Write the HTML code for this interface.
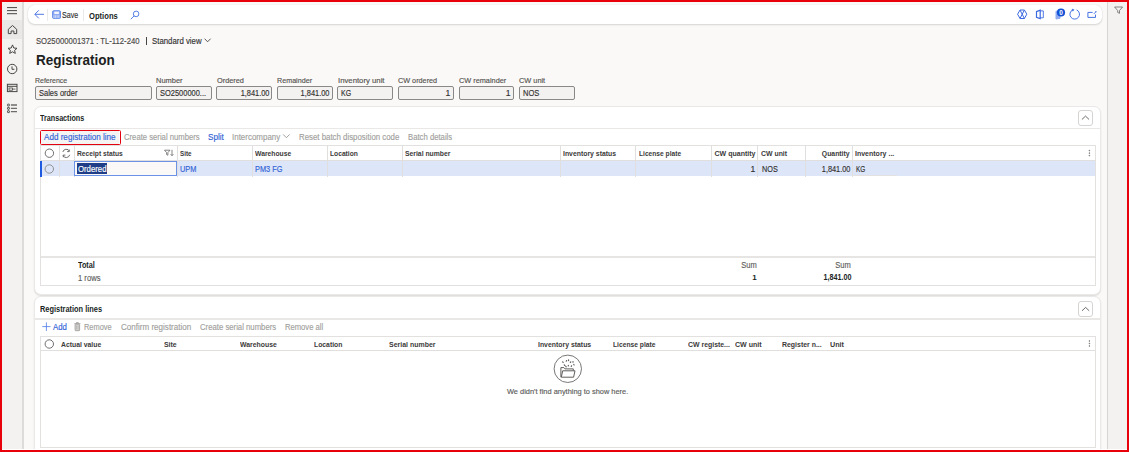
<!DOCTYPE html>
<html><head><meta charset="utf-8">
<style>
html,body{margin:0;padding:0;}
body{width:1129px;height:452px;overflow:hidden;position:relative;background:#faf9f8;font-family:"Liberation Sans",sans-serif;}
.a{position:absolute;box-sizing:border-box;}
.t{position:absolute;white-space:nowrap;line-height:normal;font-family:"Liberation Sans",sans-serif;}
.n{-webkit-text-stroke:0.15px currentColor;}
.fld{position:absolute;box-sizing:border-box;height:14.5px;top:85.7px;border:1px solid #8a8886;border-radius:2px;background:#f3f2f1;}
.vl{position:absolute;width:1px;background:#e1dfdd;}
svg{position:absolute;overflow:visible;}
</style></head><body>
<!-- nav -->
<div class="a" style="left:0;top:0;width:22px;height:452px;background:#f3f2f1;"></div>
<div class="a" style="left:2px;top:20px;width:20px;height:19px;background:#e9e8e6;"></div>
<div class="a" style="left:22px;top:0;width:2px;height:452px;background:#dddcda;"></div>
<!-- right panel -->
<div class="a" style="left:1107px;top:0;width:22px;height:452px;background:#f3f2f1;"></div>
<div class="a" style="left:1107px;top:0;width:1px;height:452px;background:#d6d5d3;"></div>

<!-- nav icons -->


<!-- toolbar card -->
<div class="a" style="left:27.8px;top:5.3px;width:1074px;height:18.6px;background:#fff;border-radius:6.5px;box-shadow:0 0 1px rgba(0,0,0,0.14),0 1px 2px rgba(0,0,0,0.14);"></div>
<div class="a" style="left:47px;top:8.8px;width:1px;height:11.8px;background:#ebeae8;"></div>
<div class="a" style="left:83px;top:9px;width:1px;height:11.5px;background:#ebeae8;"></div>

<!-- right toolbar icons -->



<div class="a" style="left:145.9px;top:37px;width:1px;height:8px;background:#484644;"></div>
<!-- header fields -->
<div class="fld" style="left:35px;width:116.5px;"></div>
<div class="fld" style="left:156px;width:55.5px;"></div>
<div class="fld" style="left:216.3px;width:56px;"></div>
<div class="fld" style="left:276.8px;width:56px;"></div>
<div class="fld" style="left:337.3px;width:55.5px;"></div>
<div class="fld" style="left:398px;width:56px;"></div>
<div class="fld" style="left:458.6px;width:55.5px;"></div>
<div class="fld" style="left:519px;width:55.8px;"></div>

<!-- card 1 -->
<div class="a" style="left:34px;top:106px;width:1066.5px;height:188.6px;background:#fff;border-radius:7px;border:1px solid #ebe9e7;box-shadow:0 1px 1.5px rgba(0,0,0,0.12);"></div>
<div class="a" style="left:35px;top:127.8px;width:1065px;height:1.5px;background:#e9e8e6;"></div>
<div class="a" style="left:1078.2px;top:110px;width:14.7px;height:15.6px;border:1px solid #d6d4d2;border-radius:3px;background:#fff;"></div>

<!-- add registration line button w/ red box -->
<div class="a" style="left:41px;top:131.3px;width:78px;height:12.3px;background:#f5f4f3;"></div>
<div class="a" style="left:39.5px;top:129.7px;width:81.3px;height:15.5px;border:1.9px solid #e3000f;border-radius:1.5px;"></div>

<!-- grid 1 -->
<div class="a" style="left:40px;top:145px;width:1056px;height:141px;border:1px solid #e3e1df;background:#fff;"></div>
<div class="a" style="left:41px;top:160px;width:1054px;height:1px;background:#e1dfdd;"></div>
<div class="a" style="left:41px;top:161px;width:1054px;height:15.3px;background:#dce6f8;"></div>
<div class="a" style="left:40px;top:161px;width:2px;height:15.6px;background:#1d5ae0;"></div>
<div class="a" style="left:41px;top:256px;width:1054px;height:1.5px;background:#e6e5e3;"></div>
<!-- column dividers -->
<div class="vl" style="left:59px;top:146px;height:30.5px;"></div>
<div class="vl" style="left:74px;top:146px;height:30.5px;"></div>
<div class="vl" style="left:177px;top:146px;height:30.5px;"></div>
<div class="vl" style="left:252px;top:146px;height:30.5px;"></div>
<div class="vl" style="left:327px;top:146px;height:30.5px;"></div>
<div class="vl" style="left:402px;top:146px;height:30.5px;"></div>
<div class="vl" style="left:560px;top:146px;height:30.5px;"></div>
<div class="vl" style="left:635px;top:146px;height:30.5px;"></div>
<div class="vl" style="left:711px;top:146px;height:30.5px;"></div>
<div class="vl" style="left:757px;top:146px;height:30.5px;"></div>
<div class="vl" style="left:805px;top:146px;height:30.5px;"></div>
<div class="vl" style="left:852px;top:146px;height:30.5px;"></div>
<div class="a" style="left:852.3px;top:175.3px;width:45px;height:1px;background:#e3e2e0;"></div>
<!-- editing cell -->
<div class="a" style="left:74px;top:161px;width:103px;height:15.3px;border:1.3px solid #6a93e8;background:#faf9f8;"></div>
<div class="a" style="left:77px;top:163px;width:29.5px;height:11.4px;background:#1f3e87;"></div>


<!-- card 2 -->
<div class="a" style="left:34px;top:296px;width:1066.5px;height:170px;background:#fff;border-radius:7px;border:1px solid #ebe9e7;box-shadow:0 1px 2px rgba(0,0,0,0.10);"></div>
<div class="a" style="left:35px;top:318.3px;width:1065px;height:1.5px;background:#e9e8e6;"></div>
<div class="a" style="left:1078.4px;top:301.2px;width:14.5px;height:15.6px;border:1px solid #d6d4d2;border-radius:3px;background:#fff;"></div>
<div class="a" style="left:40px;top:336px;width:1056px;height:112px;border:1px solid #e3e1df;background:#fff;"></div>
<div class="a" style="left:41px;top:350.3px;width:1054px;height:1px;background:#e1dfdd;"></div>


<svg style="left:0;top:0" width="24" height="120" viewBox="0 0 24 120">
  <g stroke="#484644" stroke-width="1" fill="none">
    <path d="M7 7.6H17M7 10.6H17M7 13.7H17"/>
    <path d="M8.3 29.3L12.5 25.5L16.7 29.3V33.6H13.9V31H11.1V33.6H8.3Z" stroke-linejoin="round"/>
    <path d="M12.5 44.9L13.8 48L17 48.3L14.6 50.4L15.3 53.4L12.5 51.8L9.7 53.4L10.4 50.4L8 48.3L11.2 48Z" stroke-linejoin="round"/>
    <circle cx="12.2" cy="69" r="4.7"/>
    <path d="M12 66.4V69.3H14.4"/>
    <rect x="7.4" y="84.3" width="9.6" height="7.3" />
    <path d="M7.4 86.3H17"/>
    <rect x="9" y="88" width="3.4" height="2.2" stroke-width="0.8"/>
    <path d="M12.4 89.1H15.5" stroke-width="0.8"/>
    <path d="M10.9 105H17M10.9 108.3H17M10.9 111.6H17" stroke="#6e6c6a" stroke-width="1.3"/>
    <rect x="7.5" y="104.1" width="1.9" height="1.9" rx="0.4" stroke-width="0.9"/>
    <rect x="7.5" y="107.4" width="1.9" height="1.9" rx="0.4" stroke-width="0.9"/>
    <rect x="7.5" y="110.7" width="1.9" height="1.9" rx="0.4" stroke-width="0.9"/>
  </g>
</svg>
<svg style="left:0;top:0" width="160" height="30" viewBox="0 0 160 30">
  <g stroke="#3c6ae0" stroke-width="0.9" fill="none">
    <path d="M35 14.3H44M38.8 10.3L34.8 14.3L38.8 18.3"/>
    <rect x="52.6" y="10.7" width="7.9" height="7.7" rx="1" fill="#8eaaf1" stroke="#5a84e8"/>
    <rect x="54.3" y="11.6" width="4.6" height="2.4" fill="#f2f5fd" stroke="none"/>
    <path d="M54 15.2V18.2M55.6 15.2V18.2M57.2 15.2V18.2M58.8 15.2V18.2" stroke="#e4ebfb" stroke-width="0.7"/>
  </g>
  <g stroke="#3c6ae0" stroke-width="0.85" fill="none">
    <circle cx="136.1" cy="13.9" r="2.8"/>
    <path d="M134.1 15.9L130.8 19.2"/>
  </g>
</svg>
<svg style="left:0;top:0" width="1129" height="30" viewBox="0 0 1129 30">
  <g stroke="#3c6ae0" stroke-width="1" fill="none">
    <path d="M1020 10H1024.4L1026.8 14.2L1024.4 18.5H1020L1017.6 14.2Z" stroke-linejoin="round"/>
    <path d="M1020 10L1024.4 18.5M1024.4 10L1020 18.5"/>
    <path d="M1036.5 11.6L1040.2 10.1V18.6L1036.5 17.3Z" stroke-width="1.2"/>
    <path d="M1040.2 10.9H1043.3V17.8H1040.2" stroke-width="0.9"/>
    <path d="M1056 11.2H1060V18.3L1056 19Z" fill="#8eaaf0" stroke="#8eaaf0"/>
    <path d="M1076.6 9.9A4.8 4.8 0 1 1 1072.8 9.9" stroke-width="0.95"/>
    <path d="M1072.1 9.2L1073.9 9.6L1072.9 11.2Z" fill="#3c6ae0" stroke-width="0.6"/>
    <path d="M1092.6 12.4H1087.9V17.4H1095.5V14.6" stroke-width="0.95"/>
    <path d="M1093.6 14.1L1095.7 12" stroke-width="0.8"/>
    <circle cx="1095.9" cy="11.7" r="0.7" fill="#3c6ae0" stroke="none"/>
  </g>
  <circle cx="1061" cy="12.5" r="4.1" fill="#1250d6"/>
  <text x="1061" y="14.8" font-size="6.5" font-weight="bold" fill="#fff" text-anchor="middle" font-family="Liberation Sans">0</text>
  <g stroke="#605e5c" stroke-width="0.9" fill="none">
    <path d="M1114.6 7H1122.6L1119.5 10.5V13.3L1117.7 12.5V10.5Z" stroke-width="0.75"/>
  </g>
</svg>
<svg style="left:0;top:0" width="220" height="50" viewBox="0 0 220 50">
  <path d="M204.6 38.7L207.6 41.8L210.6 38.7" stroke="#323130" stroke-width="0.8" fill="none"/>
</svg>
<svg style="left:0;top:0" width="1129" height="452" viewBox="0 0 1129 452">
  <path d="M1081.9 119.5L1085.5 116.1L1089.1 119.5" stroke="#484644" stroke-width="0.8" fill="none"/>
  <path d="M1082 310.8L1085.6 307.4L1089.2 310.8" stroke="#484644" stroke-width="0.8" fill="none"/>
</svg>
<svg style="left:0;top:0" width="300" height="150" viewBox="0 0 300 150">
  <path d="M283.1 134.4L286.4 137.7L289.7 134.4" stroke="#8a8886" stroke-width="0.8" fill="none"/>
</svg>
<svg style="left:0;top:0" width="1129" height="452" viewBox="0 0 1129 452">
  <g stroke="#605e5c" stroke-width="0.9" fill="none">
    <circle cx="49.4" cy="153.2" r="4.2"/>
    <circle cx="49.3" cy="169" r="4.2" stroke="#8a8886"/>
    <path d="M62.8 152A3.6 3.6 0 0 1 69.5 151.2M69.7 154.8A3.6 3.6 0 0 1 63 155.6"/>
    <path d="M69.2 149.5V151.6H67.1M63.3 157.2V155.1H65.4"/>
    <path d="M164.5 150.2H170L167.9 152.6V155.2L166.6 154.6V152.6Z" stroke-width="0.75"/>
    <path d="M172 149.8V155.5M170.6 154.2L172 155.7L173.4 154.2" stroke-width="0.75"/>
    <circle cx="1089.4" cy="150.6" r="0.35"/>
    <circle cx="1089.4" cy="153.1" r="0.35"/>
    <circle cx="1089.4" cy="155.6" r="0.35"/>
    <circle cx="49.3" cy="344" r="4.2"/>
    <circle cx="1089.4" cy="341" r="0.35"/>
    <circle cx="1089.4" cy="343.5" r="0.35"/>
    <circle cx="1089.4" cy="346" r="0.35"/>
  </g>
</svg>
<svg style="left:0;top:0" width="1129" height="452" viewBox="0 0 1129 452">
  <g stroke="#4a78e6" stroke-width="0.8" fill="none">
    <path d="M46.4 322.4V330.9M42.3 326.6H50.5"/>
  </g>
  <g stroke="#a19f9d" stroke-width="0.9" fill="none">
    <path d="M74.3 323.7H80.4M76.4 323.7V322.6H78.3V323.7"/>
    <rect x="75.1" y="324.2" width="4.5" height="6.5" rx="0.6" fill="#dcdad8"/>
    <path d="M76.6 325.3V329.6M78.1 325.3V329.6" stroke-width="0.6"/>
  </g>
  <g stroke="#605e5c" stroke-width="1" fill="none">
    <circle cx="567.8" cy="368.8" r="13.7" stroke="#7a7876"/>
    <path d="M560.9 377.2V367.6H563.9L565 368.9H573.3V370.6"/>
    <path d="M561.3 377.2L562.7 370.8H575L573.6 377.2Z" stroke-linejoin="round"/>
  </g>
  <g stroke="#55534f" stroke-width="1.1" stroke-linecap="round">
    <path d="M562.6 361.8l0.6 0.6M564.2 364.8l0.6 0.6M566.2 361.2l0.5 -0.7M568.6 359.8l0 0.8M570.8 361.8l-0.5 0.6M573 361.6l0 0.7M565.8 366.3l0.4 0.5M568.3 365.3l0 0.7M571.6 365.8l-0.4 0.6M573.8 364.4l0.3 0.6"/>
  </g>
</svg>
<span class="t n" style="left:62.20px;transform-origin:0 0;top:10.27px;font-size:9.2px;transform:scaleX(0.773);color:#323130;font-weight:normal;">Save</span>
<span class="t" style="left:88.80px;transform-origin:0 0;top:10.82px;font-size:8.6px;transform:scaleX(0.887);color:#201f1e;font-weight:bold;">Options</span>
<span class="t n" style="left:35.60px;transform-origin:0 0;top:35.84px;font-size:8.8px;transform:scaleX(0.873);color:#4a4846;font-weight:normal;">SO25000001371 : TL-112-240</span>
<span class="t n" style="left:151.70px;transform-origin:0 0;top:35.84px;font-size:8.8px;transform:scaleX(0.889);color:#323130;font-weight:normal;">Standard view</span>
<span class="t" style="left:35.80px;transform-origin:0 0;top:51.78px;font-size:14.5px;transform:scaleX(0.932);color:#201f1e;font-weight:bold;">Registration</span>
<span class="t n" style="left:35.30px;transform-origin:0 0;top:75.83px;font-size:7.7px;transform:scaleX(0.906);color:#55534f;font-weight:normal;">Reference</span>
<span class="t n" style="left:156.40px;transform-origin:0 0;top:75.83px;font-size:7.7px;transform:scaleX(0.971);color:#55534f;font-weight:normal;">Number</span>
<span class="t n" style="left:216.70px;transform-origin:0 0;top:75.83px;font-size:7.7px;transform:scaleX(0.956);color:#55534f;font-weight:normal;">Ordered</span>
<span class="t n" style="left:277.30px;transform-origin:0 0;top:75.83px;font-size:7.7px;transform:scaleX(0.932);color:#55534f;font-weight:normal;">Remainder</span>
<span class="t n" style="left:337.90px;transform-origin:0 0;top:75.83px;font-size:7.7px;transform:scaleX(1.008);color:#55534f;font-weight:normal;">Inventory unit</span>
<span class="t n" style="left:398.30px;transform-origin:0 0;top:75.83px;font-size:7.7px;transform:scaleX(0.944);color:#55534f;font-weight:normal;">CW ordered</span>
<span class="t n" style="left:458.70px;transform-origin:0 0;top:75.83px;font-size:7.7px;transform:scaleX(0.953);color:#55534f;font-weight:normal;">CW remainder</span>
<span class="t n" style="left:519.30px;transform-origin:0 0;top:75.83px;font-size:7.7px;transform:scaleX(0.957);color:#55534f;font-weight:normal;">CW unit</span>
<span class="t n" style="left:38.80px;transform-origin:0 0;top:88.42px;font-size:8.6px;transform:scaleX(0.875);color:#323130;font-weight:normal;">Sales order</span>
<span class="t n" style="left:159.60px;transform-origin:0 0;top:88.42px;font-size:8.6px;transform:scaleX(0.869);color:#323130;font-weight:normal;">SO2500000...</span>
<span class="t n" style="right:859.70px;transform-origin:100% 0;top:88.42px;font-size:8.6px;transform:scaleX(0.860);color:#323130;font-weight:normal;">1,841.00</span>
<span class="t n" style="right:799.40px;transform-origin:100% 0;top:88.42px;font-size:8.6px;transform:scaleX(0.863);color:#323130;font-weight:normal;">1,841.00</span>
<span class="t n" style="left:340.70px;transform-origin:0 0;top:88.42px;font-size:8.6px;transform:scaleX(0.813);color:#323130;font-weight:normal;">KG</span>
<span class="t n" style="right:678.80px;transform-origin:100% 0;top:88.42px;font-size:8.6px;transform:scaleX(1.000);color:#323130;font-weight:normal;">1</span>
<span class="t n" style="right:618.50px;transform-origin:100% 0;top:88.42px;font-size:8.6px;transform:scaleX(1.000);color:#323130;font-weight:normal;">1</span>
<span class="t n" style="left:522.50px;transform-origin:0 0;top:88.42px;font-size:8.6px;transform:scaleX(0.875);color:#323130;font-weight:normal;">NOS</span>
<span class="t" style="left:40.00px;transform-origin:0 0;top:113.88px;font-size:8.2px;transform:scaleX(0.876);color:#201f1e;font-weight:bold;">Transactions</span>
<span class="t n" style="left:44.00px;transform-origin:0 0;top:132.12px;font-size:8.6px;transform:scaleX(0.943);color:#3262d6;font-weight:normal;">Add registration line</span>
<span class="t n" style="left:123.80px;transform-origin:0 0;top:132.12px;font-size:8.6px;transform:scaleX(0.895);color:#a19f9d;font-weight:normal;">Create serial numbers</span>
<span class="t n" style="left:208.10px;transform-origin:0 0;top:132.12px;font-size:8.6px;transform:scaleX(0.950);color:#3262d6;font-weight:normal;">Split</span>
<span class="t n" style="left:232.20px;transform-origin:0 0;top:132.12px;font-size:8.6px;transform:scaleX(0.927);color:#a19f9d;font-weight:normal;">Intercompany</span>
<span class="t n" style="left:298.60px;transform-origin:0 0;top:132.12px;font-size:8.6px;transform:scaleX(0.913);color:#a19f9d;font-weight:normal;">Reset batch disposition code</span>
<span class="t n" style="left:407.50px;transform-origin:0 0;top:132.12px;font-size:8.6px;transform:scaleX(0.898);color:#a19f9d;font-weight:normal;">Batch details</span>
<span class="t" style="left:76.70px;transform-origin:0 0;top:148.74px;font-size:7.8px;transform:scaleX(0.857);color:#3b3a39;font-weight:bold;">Receipt status</span>
<span class="t" style="left:180.00px;transform-origin:0 0;top:148.74px;font-size:7.8px;transform:scaleX(0.804);color:#3b3a39;font-weight:bold;">Site</span>
<span class="t" style="left:255.00px;transform-origin:0 0;top:148.74px;font-size:7.8px;transform:scaleX(0.867);color:#3b3a39;font-weight:bold;">Warehouse</span>
<span class="t" style="left:330.00px;transform-origin:0 0;top:148.74px;font-size:7.8px;transform:scaleX(0.858);color:#3b3a39;font-weight:bold;">Location</span>
<span class="t" style="left:405.00px;transform-origin:0 0;top:148.74px;font-size:7.8px;transform:scaleX(0.873);color:#3b3a39;font-weight:bold;">Serial number</span>
<span class="t" style="left:563.00px;transform-origin:0 0;top:148.74px;font-size:7.8px;transform:scaleX(0.881);color:#3b3a39;font-weight:bold;">Inventory status</span>
<span class="t" style="left:638.50px;transform-origin:0 0;top:148.74px;font-size:7.8px;transform:scaleX(0.852);color:#3b3a39;font-weight:bold;">License plate</span>
<span class="t" style="left:760.70px;transform-origin:0 0;top:148.74px;font-size:7.8px;transform:scaleX(0.886);color:#3b3a39;font-weight:bold;">CW unit</span>
<span class="t" style="left:854.80px;transform-origin:0 0;top:148.74px;font-size:7.8px;transform:scaleX(0.898);color:#3b3a39;font-weight:bold;">Inventory ...</span>
<span class="t" style="right:373.20px;transform-origin:100% 0;top:148.74px;font-size:7.8px;transform:scaleX(0.901);color:#3b3a39;font-weight:bold;">CW quantity</span>
<span class="t" style="right:279.00px;transform-origin:100% 0;top:148.74px;font-size:7.8px;transform:scaleX(0.879);color:#3b3a39;font-weight:bold;">Quantity</span>
<span class="t n" style="left:77.50px;transform-origin:0 0;top:164.02px;font-size:8.6px;transform:scaleX(0.903);color:#ffffff;font-weight:normal;">Ordered</span>
<span class="t n" style="left:180.40px;transform-origin:0 0;top:164.02px;font-size:8.6px;transform:scaleX(0.858);color:#3262d6;font-weight:normal;">UPM</span>
<span class="t n" style="left:255.00px;transform-origin:0 0;top:164.02px;font-size:8.6px;transform:scaleX(0.859);color:#3262d6;font-weight:normal;">PM3 FG</span>
<span class="t n" style="right:373.70px;transform-origin:100% 0;top:164.02px;font-size:8.6px;transform:scaleX(1.000);color:#323130;font-weight:normal;">1</span>
<span class="t n" style="left:761.50px;transform-origin:0 0;top:164.02px;font-size:8.6px;transform:scaleX(0.848);color:#323130;font-weight:normal;">NOS</span>
<span class="t n" style="right:279.00px;transform-origin:100% 0;top:164.02px;font-size:8.6px;transform:scaleX(0.857);color:#323130;font-weight:normal;">1,841.00</span>
<span class="t n" style="left:855.90px;transform-origin:0 0;top:164.02px;font-size:8.6px;transform:scaleX(0.750);color:#323130;font-weight:normal;">KG</span>
<span class="t" style="left:77.80px;transform-origin:0 0;top:261.48px;font-size:8.2px;transform:scaleX(0.890);color:#201f1e;font-weight:bold;">Total</span>
<span class="t n" style="left:77.80px;transform-origin:0 0;top:272.52px;font-size:8.6px;transform:scaleX(0.888);color:#605e5c;font-weight:normal;">1 rows</span>
<span class="t n" style="right:372.30px;transform-origin:100% 0;top:259.62px;font-size:8.6px;transform:scaleX(0.877);color:#605e5c;font-weight:normal;">Sum</span>
<span class="t n" style="right:278.00px;transform-origin:100% 0;top:259.62px;font-size:8.6px;transform:scaleX(0.877);color:#605e5c;font-weight:normal;">Sum</span>
<span class="t" style="right:372.30px;transform-origin:100% 0;top:273.16px;font-size:8.0px;transform:scaleX(1.000);color:#201f1e;font-weight:bold;">1</span>
<span class="t" style="right:278.00px;transform-origin:100% 0;top:272.02px;font-size:8.6px;transform:scaleX(0.836);color:#201f1e;font-weight:bold;">1,841.00</span>
<span class="t" style="left:40.00px;transform-origin:0 0;top:304.98px;font-size:8.2px;transform:scaleX(0.903);color:#201f1e;font-weight:bold;">Registration lines</span>
<span class="t n" style="left:52.90px;transform-origin:0 0;top:321.92px;font-size:8.6px;transform:scaleX(0.908);color:#3262d6;font-weight:normal;">Add</span>
<span class="t n" style="left:84.40px;transform-origin:0 0;top:321.92px;font-size:8.6px;transform:scaleX(0.862);color:#a19f9d;font-weight:normal;">Remove</span>
<span class="t n" style="left:121.40px;transform-origin:0 0;top:321.92px;font-size:8.6px;transform:scaleX(0.937);color:#a19f9d;font-weight:normal;">Confirm registration</span>
<span class="t n" style="left:200.20px;transform-origin:0 0;top:321.92px;font-size:8.6px;transform:scaleX(0.901);color:#a19f9d;font-weight:normal;">Create serial numbers</span>
<span class="t n" style="left:285.00px;transform-origin:0 0;top:321.92px;font-size:8.6px;transform:scaleX(0.888);color:#a19f9d;font-weight:normal;">Remove all</span>
<span class="t" style="left:61.30px;transform-origin:0 0;top:339.64px;font-size:7.8px;transform:scaleX(0.875);color:#3b3a39;font-weight:bold;">Actual value</span>
<span class="t" style="left:163.90px;transform-origin:0 0;top:339.64px;font-size:7.8px;transform:scaleX(0.888);color:#3b3a39;font-weight:bold;">Site</span>
<span class="t" style="left:239.60px;transform-origin:0 0;top:339.64px;font-size:7.8px;transform:scaleX(0.881);color:#3b3a39;font-weight:bold;">Warehouse</span>
<span class="t" style="left:314.10px;transform-origin:0 0;top:339.64px;font-size:7.8px;transform:scaleX(0.874);color:#3b3a39;font-weight:bold;">Location</span>
<span class="t" style="left:389.30px;transform-origin:0 0;top:339.64px;font-size:7.8px;transform:scaleX(0.894);color:#3b3a39;font-weight:bold;">Serial number</span>
<span class="t" style="left:537.80px;transform-origin:0 0;top:339.64px;font-size:7.8px;transform:scaleX(0.883);color:#3b3a39;font-weight:bold;">Inventory status</span>
<span class="t" style="left:612.90px;transform-origin:0 0;top:339.64px;font-size:7.8px;transform:scaleX(0.860);color:#3b3a39;font-weight:bold;">License plate</span>
<span class="t" style="left:687.60px;transform-origin:0 0;top:339.64px;font-size:7.8px;transform:scaleX(0.887);color:#3b3a39;font-weight:bold;">CW registe...</span>
<span class="t" style="left:735.20px;transform-origin:0 0;top:339.64px;font-size:7.8px;transform:scaleX(0.906);color:#3b3a39;font-weight:bold;">CW unit</span>
<span class="t" style="left:782.00px;transform-origin:0 0;top:339.64px;font-size:7.8px;transform:scaleX(0.889);color:#3b3a39;font-weight:bold;">Register n...</span>
<span class="t" style="left:829.70px;transform-origin:0 0;top:339.64px;font-size:7.8px;transform:scaleX(0.923);color:#3b3a39;font-weight:bold;">Unit</span>
<span class="t n" style="left:507.10px;transform-origin:0 0;top:386.81px;font-size:7.5px;transform:scaleX(0.989);color:#605e5c;font-weight:normal;">We didn't find anything to show here.</span>

<!-- red frame -->
<div class="a" style="left:0;top:449px;width:1129px;height:1px;background:#ffffff;"></div>
<div class="a" style="left:0;top:0;width:1129px;height:452px;border-style:solid;border-color:#e8000b;border-width:2px 2px 2.5px 2px;"></div>
</body></html>
